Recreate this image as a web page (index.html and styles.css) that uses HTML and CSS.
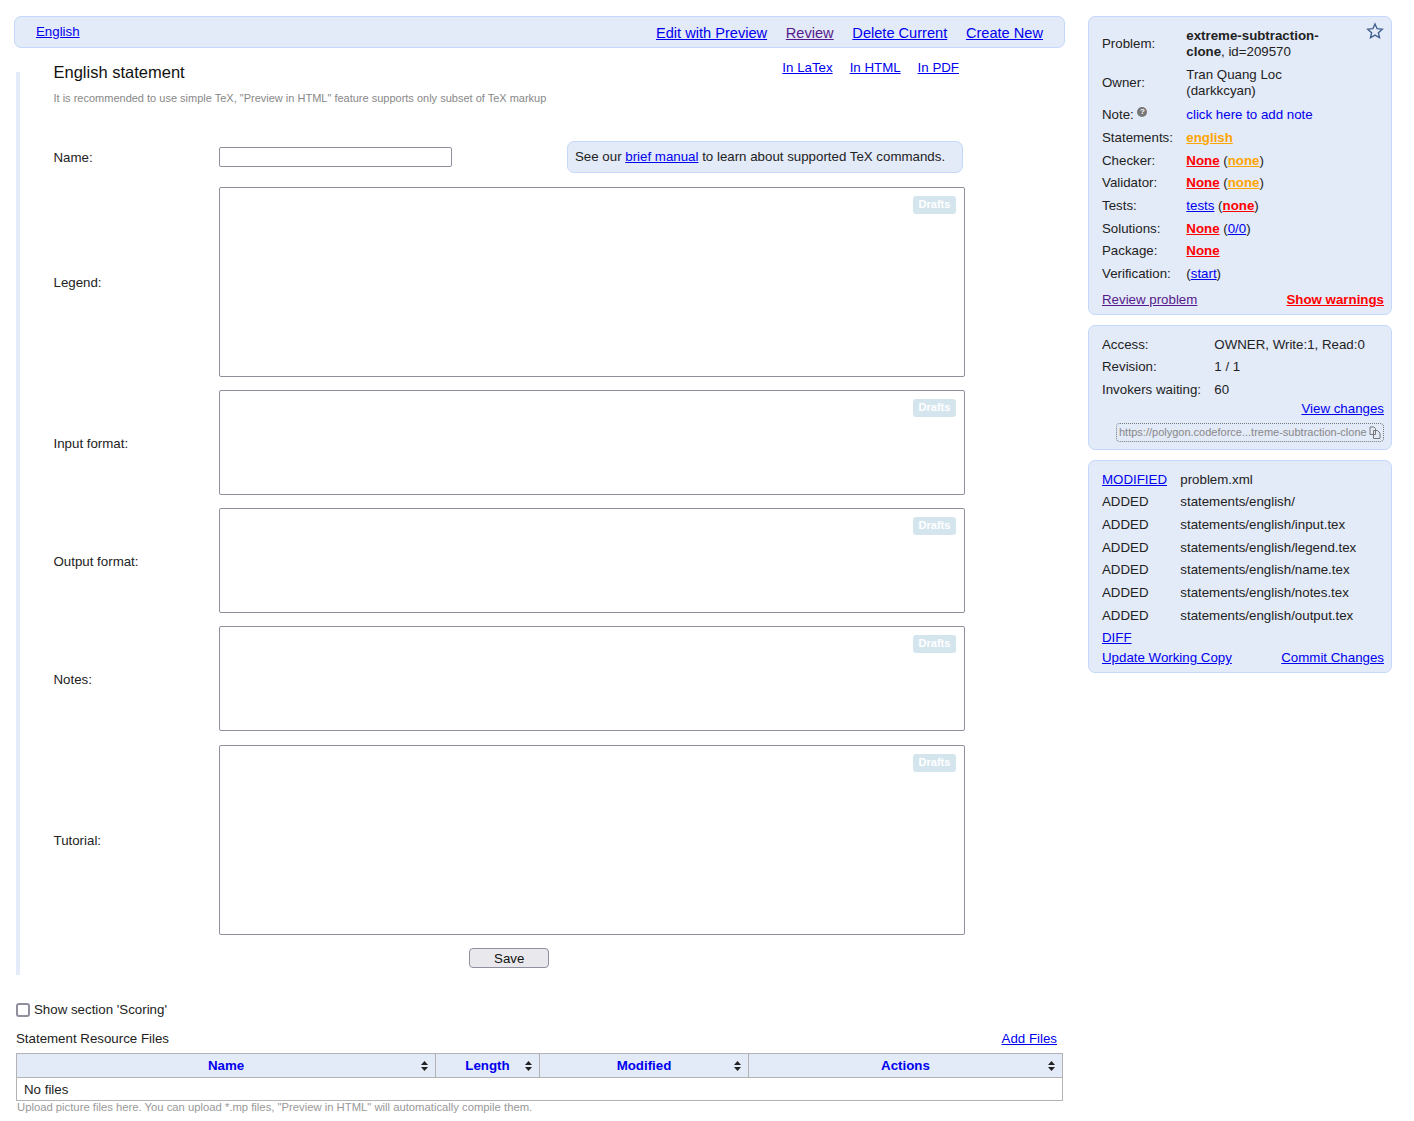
FILE: index.html
```html
<!DOCTYPE html>
<html>
<head>
  <title>English statement</title>
  <link rel="stylesheet" href="styles.css">
</head>
<body>
  <div class="page">
    <div class="main">
      <div class="panel top-bar">
        <a href="#">English</a>
        <div class="top-actions">
          <a href="#">Edit with Preview</a>
          <a href="#" class="visited">Review</a>
          <a href="#">Delete Current</a>
          <a href="#">Create New</a>
        </div>
      </div>

      <div class="statement">
        <div class="statement-head">
          <h1>English statement</h1>
          <div class="view-links">
            <a href="#">In LaTex</a>
            <a href="#">In HTML</a>
            <a href="#">In PDF</a>
          </div>
        </div>
        <p class="hint statement-hint">It is recommended to use simple TeX, "Preview in HTML" feature supports only subset of TeX markup</p>

        <form class="statement-form">
          <label>Name:</label>
          <div class="name-field">
            <input type="text" class="name-input">
            <div class="panel manual-note">See our <a href="#">brief manual</a> to learn about supported TeX commands.</div>
          </div>

          <label>Legend:</label>
          <div class="editor"><textarea class="tall"></textarea><span class="drafts">Drafts</span></div>

          <label>Input format:</label>
          <div class="editor"><textarea class="short"></textarea><span class="drafts">Drafts</span></div>

          <label>Output format:</label>
          <div class="editor"><textarea class="short"></textarea><span class="drafts">Drafts</span></div>

          <label>Notes:</label>
          <div class="editor"><textarea class="short"></textarea><span class="drafts">Drafts</span></div>

          <label>Tutorial:</label>
          <div class="editor"><textarea class="tall"></textarea><span class="drafts">Drafts</span></div>

          <div class="form-actions"><button type="button" class="save-button">Save</button></div>
        </form>
      </div>

      <label class="scoring-toggle"><input type="checkbox"> Show section 'Scoring'</label>

      <div class="resources-head">
        <span>Statement Resource Files</span>
        <a href="#">Add Files</a>
      </div>
      <table class="resources">
        <thead>
          <tr>
            <th class="col-name"><a>Name</a><svg class="sort" viewBox="0 0 7 10"><path d="M3.5 0L7 4H0ZM0 6H7L3.5 10Z"/></svg></th>
            <th class="col-length"><a>Length</a><svg class="sort" viewBox="0 0 7 10"><path d="M3.5 0L7 4H0ZM0 6H7L3.5 10Z"/></svg></th>
            <th class="col-modified"><a>Modified</a><svg class="sort" viewBox="0 0 7 10"><path d="M3.5 0L7 4H0ZM0 6H7L3.5 10Z"/></svg></th>
            <th class="col-actions"><a>Actions</a><svg class="sort" viewBox="0 0 7 10"><path d="M3.5 0L7 4H0ZM0 6H7L3.5 10Z"/></svg></th>
          </tr>
        </thead>
        <tbody>
          <tr><td colspan="4">No files</td></tr>
        </tbody>
      </table>
      <p class="hint resources-hint">Upload picture files here. You can upload *.mp files, "Preview in HTML" will automatically compile them.</p>
    </div>

    <div class="sidebar">
      <div class="panel side-panel problem-panel">
        <svg class="star" viewBox="0 0 24 24"><path d="M12 2.6l2.8 6.3 6.9.7-5.2 4.6 1.5 6.8-6-3.5-6 3.5 1.5-6.8-5.2-4.6 6.9-.7z"/></svg>
        <div class="info-grid problem-grid">
          <span>Problem:</span><span><b>extreme-subtraction-clone</b>, id=209570</span>
          <span>Owner:</span><span>Tran Quang Loc (darkkcyan)</span>
          <span class="note-label">Note: <i class="help">?</i></span><span class="note-value"><a href="#" class="plain">click here to add note</a></span>
          <span>Statements:</span><span><a href="#" class="warn">english</a></span>
          <span>Checker:</span><span><a href="#" class="bad">None</a> (<a href="#" class="warn">none</a>)</span>
          <span>Validator:</span><span><a href="#" class="bad">None</a> (<a href="#" class="warn">none</a>)</span>
          <span>Tests:</span><span><a href="#">tests</a> (<a href="#" class="bad">none</a>)</span>
          <span>Solutions:</span><span><a href="#" class="bad">None</a> (<a href="#">0/0</a>)</span>
          <span>Package:</span><span><a href="#" class="bad">None</a></span>
          <span>Verification:</span><span>(<a href="#">start</a>)</span>
        </div>
        <div class="side-footer problem-footer">
          <a href="#" class="visited">Review problem</a>
          <a href="#" class="bad">Show warnings</a>
        </div>
      </div>

      <div class="panel side-panel access-panel">
        <div class="info-grid access-grid">
          <span>Access:</span><span>OWNER, Write:1, Read:0</span>
          <span>Revision:</span><span>1 / 1</span>
          <span>Invokers waiting:</span><span>60</span>
        </div>
        <div class="view-changes"><a href="#">View changes</a></div>
        <div class="share-link">
          <span>https://polygon.codeforce...treme-subtraction-clone</span>
          <svg class="copy" viewBox="0 0 12 13"><path d="M1 1h4l1.5 1.5v6H1zM4.5 4.5h4l2.5 2.5v5.5H4.5z"/></svg>
        </div>
      </div>

      <div class="panel side-panel files-panel">
        <div class="info-grid files-grid">
          <span><a href="#">MODIFIED</a></span><span>problem.xml</span>
          <span>ADDED</span><span>statements/english/</span>
          <span>ADDED</span><span>statements/english/input.tex</span>
          <span>ADDED</span><span>statements/english/legend.tex</span>
          <span>ADDED</span><span>statements/english/name.tex</span>
          <span>ADDED</span><span>statements/english/notes.tex</span>
          <span>ADDED</span><span>statements/english/output.tex</span>
          <span><a href="#">DIFF</a></span><span></span>
        </div>
        <div class="side-footer files-footer">
          <a href="#">Update Working Copy</a>
          <a href="#">Commit Changes</a>
        </div>
      </div>
    </div>
  </div>
</body>
</html>
```

FILE: styles.css
```css
body {
  margin: 0;
  padding: 0;
  background-color: #ffffff;
  font-family: "Liberation Sans", Arial, sans-serif;
  font-size: 13.3px;
  line-height: 16px;
  color: #222222;
}

a {
  color: #0000ee;
}

a.visited {
  color: #551a8b;
}

a.bad {
  color: #ff0000;
  font-weight: bold;
}

a.warn {
  color: #ffa500;
  font-weight: bold;
}

a.plain {
  text-decoration: none;
}

.page {
  display: flex;
  align-items: flex-start;
  gap: 23px;
  padding: 16px 22px 0 14px;
}

.main {
  width: 1051px;
  flex: none;
}

.sidebar {
  width: 304px;
  flex: none;
  display: flex;
  flex-direction: column;
  gap: 10px;
}

.panel {
  background-color: #e3eaf8;
  border: 1px solid #c5d8fb;
  border-radius: 7px;
  box-sizing: border-box;
}

/* top bar */
.top-bar {
  height: 32px;
  display: flex;
  justify-content: space-between;
  align-items: center;
  padding: 0 21px;
}

.top-actions {
  display: flex;
  gap: 18.7px;
  font-size: 14.6px;
  padding-top: 1px;
}

/* statement */
.statement {
  display: flow-root;
  margin: 24px 0 0 2px;
  height: 903px;
  box-sizing: border-box;
  border-left: 4px solid #e3eaf8;
  padding-left: 33.5px;
}

.statement-head {
  display: flex;
  justify-content: space-between;
  margin-top: -20px;
  width: 905.5px;
}

h1 {
  margin: 0;
  font-size: 16.5px;
  font-weight: normal;
  line-height: 24px;
  color: #111111;
  padding-top: 8px;
}

.view-links {
  display: flex;
  gap: 17px;
  line-height: 32px;
}

.hint {
  margin: 0;
  font-size: 11px;
  line-height: 14px;
  color: #888888;
}

.statement-hint {
  margin-top: 7px;
}

.statement-form {
  display: grid;
  grid-template-columns: 165.5px 746px;
  row-gap: 13.15px;
  align-items: center;
  margin-top: 36px;
}

.statement-form label {
  display: block;
  padding-top: 2px;
}

.name-field {
  display: flex;
  justify-content: space-between;
  align-items: flex-start;
  padding-right: 2px;
  height: 32.85px;
}

.name-input {
  width: 233px;
  height: 20px;
  box-sizing: border-box;
  border: 1px solid #8f8f9d;
  border-radius: 2px;
  padding: 1px 2px;
  margin-top: 6px;
}

.manual-note {
  width: 396px;
  height: 32px;
  padding: 7px;
  white-space: nowrap;
}

.editor {
  position: relative;
  display: flex;
}

.editor textarea {
  width: 746px;
  box-sizing: border-box;
  border: 1px solid #8f8f9d;
  border-radius: 2px;
  resize: none;
  margin: 0;
}

.editor textarea.tall {
  height: 190px;
}

.editor textarea.short {
  height: 105px;
}

.drafts {
  position: absolute;
  top: 9px;
  right: 9px;
  width: 43px;
  height: 18px;
  border-radius: 3px;
  background-color: #d5e5ee;
  color: #ffffff;
  font-size: 11px;
  font-weight: bold;
  line-height: 17px;
  text-align: center;
}

.form-actions {
  grid-column: 1 / -1;
  display: flex;
  justify-content: center;
}

.save-button {
  width: 80px;
  height: 20px;
  padding: 2px 0 0;
  font-family: inherit;
  font-size: 13.3px;
  color: #111111;
  background-color: #e9e9ed;
  border: 1px solid #8f8f9d;
  border-radius: 4px;
}

/* scoring + resources */
.scoring-toggle {
  display: flex;
  align-items: center;
  gap: 4px;
  margin: 27px 0 0 2px;
}

.scoring-toggle input {
  appearance: none;
  width: 14px;
  height: 14px;
  margin: 0;
  border: 2px solid #8f8f9d;
  border-radius: 3px;
  background-color: #ffffff;
}

.resources-head {
  display: flex;
  justify-content: space-between;
  margin: 13px 8px 6px 2px;
}

.resources {
  margin-left: 2px;
  width: 1047px;
  table-layout: fixed;
  border-collapse: collapse;
  border: 1px solid #b3b3b3;
}

.resources th {
  position: relative;
  height: 24px;
  padding: 0;
  background-color: #e3eaf8;
  border: 1px solid #b3b3b3;
  box-sizing: border-box;
  color: #0000cc;
}

.resources td {
  height: 23px;
  padding: 2px 7px 0;
  box-sizing: border-box;
}

.col-name {
  width: 419px;
}

.col-length {
  width: 104px;
}

.col-modified {
  width: 209px;
}

.sort {
  position: absolute;
  right: 7px;
  top: 7px;
  width: 7px;
  height: 10px;
  fill: #222222;
}

.resources-hint {
  margin-left: 3px;
  font-size: 11.28px;
  line-height: 13px;
  color: #999999;
}

/* sidebar */
.side-panel {
  position: relative;
  padding: 7px 7px 6px 13px;
}

.star {
  position: absolute;
  top: 5px;
  right: 7px;
  width: 18px;
  height: 18px;
  fill: none;
  stroke: #3f5f8f;
  stroke-width: 1.8;
}

.info-grid {
  display: grid;
}

.info-grid span {
  padding: 3.33px 0;
}

.problem-panel {
  height: 299px;
  padding-top: 8px;
}

.problem-grid {
  grid-template-columns: 84.3px 150px;
  align-items: center;
}

.note-label,
.note-value {
  padding-top: 5px !important;
}

.help {
  display: inline-block;
  width: 10px;
  height: 10px;
  border-radius: 50%;
  background-color: #777777;
  color: #ffffff;
  font-size: 8px;
  font-style: normal;
  font-weight: bold;
  line-height: 10px;
  text-align: center;
  vertical-align: 5px;
}

.side-footer {
  display: flex;
  justify-content: space-between;
}

.problem-footer {
  margin-top: 7px;
}

.access-panel {
  height: 125px;
  padding-top: 7.5px;
}

.access-grid {
  grid-template-columns: 112.3px auto;
}

.view-changes {
  text-align: right;
  margin-top: -0.5px;
}

.share-link {
  display: flex;
  justify-content: space-between;
  align-items: center;
  box-sizing: border-box;
  width: 268px;
  height: 19px;
  margin: 6.5px 0 0 14px;
  padding: 0 2px 2px;
  border: 1px dotted #777777;
  border-radius: 4px;
  font-size: 11px;
  color: #888888;
  white-space: nowrap;
}

.copy {
  width: 12px;
  height: 13px;
  flex: none;
  fill: #e3eaf8;
  stroke: #777777;
  stroke-width: 1;
  margin-top: 2px;
}

.files-panel {
  height: 213px;
  padding-top: 7.5px;
}

.files-grid {
  grid-template-columns: 78.3px auto;
}

.files-footer {
  margin-top: 0.5px;
}
```
